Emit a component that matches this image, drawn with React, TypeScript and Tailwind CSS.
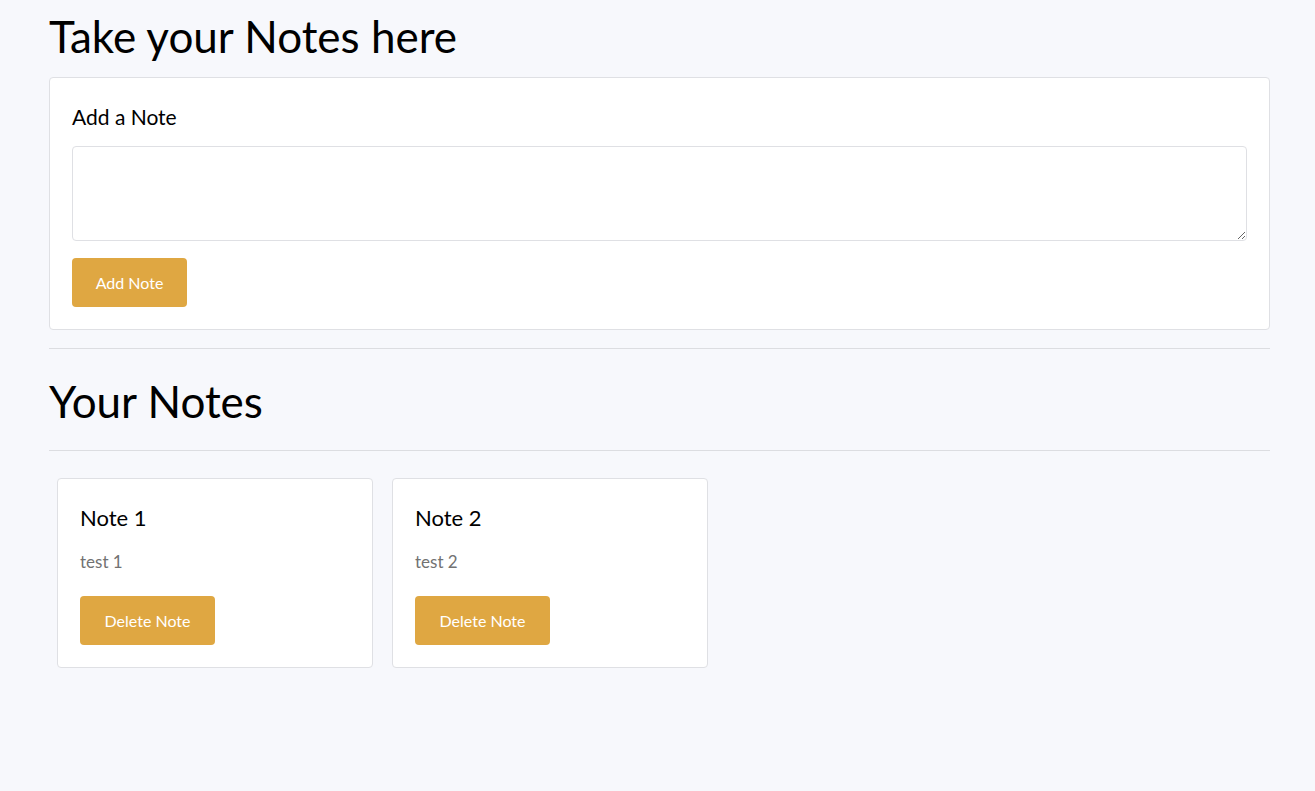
import { useState } from "react";

type Note = { title: string; text: string };

export default function App() {
  const [draft, setDraft] = useState("");
  const [notes, setNotes] = useState<Note[]>([
    { title: "Note 1", text: "test 1" },
    { title: "Note 2", text: "test 2" },
  ]);

  const addNote = () => {
    if (!draft.trim()) return;
    setNotes([...notes, { title: `Note ${notes.length + 1}`, text: draft }]);
    setDraft("");
  };

  const deleteNote = (index: number) => {
    setNotes(notes.filter((_, i) => i !== index));
  };

  return (
    <div className="min-h-[791px] bg-[#f7f8fc] font-['Lato',sans-serif] text-black">
      <div className="ml-[49px] w-[1221px] pt-[8px]">
        <h1 className="text-[44px] leading-[56px] mb-[13px]">Take your Notes here</h1>

        {/* Formulário */}
        <div className="bg-white border border-[#dfe0e4] rounded-[4px] px-[22px] pt-[24px] pb-[22px]">
          <h5 className="text-[21px] leading-[30px] mb-[14px]">Add a Note</h5>
          <textarea
            value={draft}
            onChange={(e) => setDraft(e.target.value)}
            className="block w-full h-[95px] border border-[#dfe0e4] rounded-[4px] px-3 py-2 text-[16px] focus:outline-none"
          />
          <button
            onClick={addNote}
            className="mt-[17px] h-[49px] w-[115px] bg-[#dfa742] text-white text-[16px] rounded-[4px]"
          >
            Add Note
          </button>
        </div>

        <hr className="mt-[18px] border-0 border-t border-[#dcdde1]" />

        <h1 className="text-[44px] leading-[56px] mt-[24px] mb-[21px]">Your Notes</h1>

        <hr className="border-0 border-t border-[#dcdde1]" />

        {/* Notas */}
        <div className="flex flex-wrap gap-[19px] pl-[8px] mt-[27px]">
          {notes.map((note, i) => (
            <div
              key={i}
              className="w-[316px] h-[190px] bg-white border border-[#dfe0e4] rounded-[4px] px-[22px] pt-[24px]"
            >
              <h5 className="text-[22px] leading-[30px] mb-[17px]">{note.title}</h5>
              <p className="text-[17px] leading-[24px] text-[#727272]">{note.text}</p>
              <button
                onClick={() => deleteNote(i)}
                className="mt-[22px] h-[49px] w-[135px] bg-[#dfa742] text-white text-[16px] rounded-[4px]"
              >
                Delete Note
              </button>
            </div>
          ))}
        </div>
      </div>
    </div>
  );
}
